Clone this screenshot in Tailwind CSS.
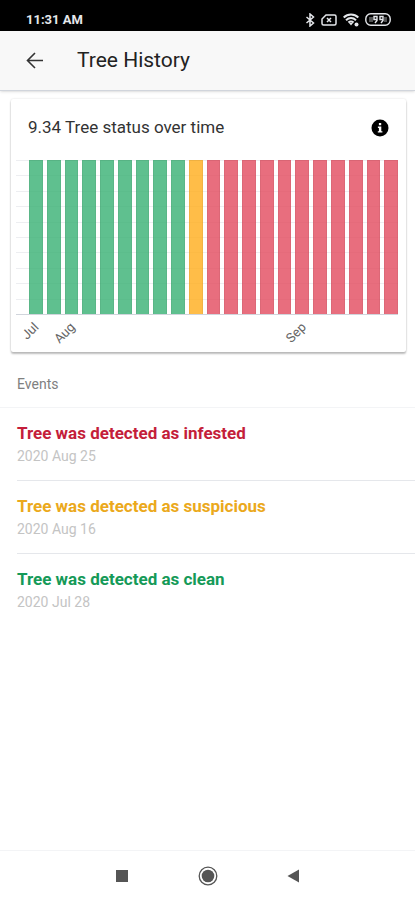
<!DOCTYPE html>
<html lang="en">
<head>
  <meta charset="UTF-8">
  <meta name="viewport" content="width=device-width, initial-scale=1.0">
  <title>Tree History</title>
  <script src="https://cdn.jsdelivr.net/npm/@tailwindcss/browser@4"></script>
</head>
<body class="bg-white font-[Roboto,sans-serif] text-[#333]">
  <div class="flex min-h-screen flex-col">

    <!-- Status bar -->
    <div class="flex h-[31px] items-center justify-between bg-black pl-[26px] pr-6 pt-2 text-gray-200">
      <span class="text-[13px] font-bold">11:31 AM</span>
      <div class="flex items-center gap-1.5">
        <svg class="h-3.5 w-2.5" viewBox="0 0 10 14" fill="none" stroke="currentColor" stroke-width="1.5"><path d="M1.500 4l7 6L5 13V1l3.500 3-7 6"/></svg>
        <svg class="h-3 w-4" viewBox="0 0 16 12" fill="none" stroke="currentColor" stroke-width="1.5"><path d="M5 1h8.500a1.500 1.500 0 0 1 1.500 1.500v7a1.500 1.500 0 0 1-1.500 1.500h-11A1.500 1.500 0 0 1 1 9.500V5z"/><path d="M6 4l4 4M10 4L6 8"/></svg>
        <svg class="h-3.5 w-4" viewBox="0 0 16 14" fill="none" stroke="currentColor" stroke-width="2"><path d="M.7 4.500c4.200-4 10.400-4 14.600 0M3 7.200c3-2.800 7-2.800 10 0M5.400 9.600c1.600-1.400 3.600-1.400 5.200 0"/><path d="M6 10h4l-2 2.600z" fill="currentColor" stroke="none"/><circle cx="13.500" cy="11.500" r="2" fill="currentColor" stroke="none"/></svg>
        <svg class="h-[13px] w-[26px]" viewBox="0 0 26 13" fill="none" stroke="currentColor" stroke-width="1.4"><rect x=".8" y=".8" width="24.400" height="11.400" rx="5"/><path d="M4 6.500h4M19 6.500h3" stroke-width="5" stroke-opacity=".35"/><path d="M9 3.500h3v3H9zM12 6v1.500L10 10M15 3.500h3v3h-3zM18 6v1.500L16 10"/></svg>
      </div>
    </div>

    <!-- App bar -->
    <header class="flex h-[60px] items-center border-b border-gray-300 bg-[#f8f8f8] pl-[26px] shadow-sm">
      <button type="button" aria-label="Back" class="mr-[34px]">
        <svg class="h-[17px] w-[17px]" viewBox="0 0 17 17" fill="none" stroke="currentColor" stroke-width="1.6"><path d="M17 8.500H1.500M9 1L1.500 8.500 9 16"/></svg>
      </button>
      <h1 class="text-[21px] text-[#222]">Tree History</h1>
    </header>

    <main class="flex-1">
      <!-- Chart card -->
      <section class="ml-[11px] mr-[9px] mt-2 rounded-xs bg-white pb-[37px] shadow-[0_2px_2px_rgba(0,0,0,0.25),0_0_2px_rgba(0,0,0,0.15)]">
        <div class="mb-[3px] flex h-[58px] items-center justify-between pl-[17px] pr-[17px]">
          <h2 class="text-[17px]">9.34 Tree status over time</h2>
          <button type="button" aria-label="Info">
            <svg class="h-[18px] w-[18px]" viewBox="0 0 18 18"><circle cx="9" cy="9" r="8.500" fill="#000"/><path d="M7.900 4h2.300v2.200H7.900zM6.900 7.500h3.400v4.700h1.100v1.400H6.800v-1.400h1.100V8.900h-1z" fill="#fff"/></svg>
          </button>
        </div>
        <div class="relative ml-[5px] mr-2">
          <div id="grid" class="absolute inset-0 flex flex-col border-b border-gray-300"></div>
          <div id="bars" class="relative ml-[13px] flex h-[155px] gap-1"></div>
        </div>
      </section>

      <!-- Events -->
      <section>
        <h3 class="flex h-14 items-center border-b border-gray-100 px-[17px] pt-2 text-sm text-[#808080]">Events</h3>
        <ul class="pl-[17px]">
          <li class="h-[73px] border-b border-gray-200 pt-[13px]">
            <p class="text-[17px] leading-6 font-bold text-[#c41e3a]">Tree was detected as infested</p>
            <p class="text-sm leading-[22px] text-[#c4c4c4]">2020 Aug 25</p>
          </li>
          <li class="h-[73px] border-b border-gray-200 pt-[13px]">
            <p class="text-[17px] leading-6 font-bold text-[#eba91c]">Tree was detected as suspicious</p>
            <p class="text-sm leading-[22px] text-[#c4c4c4]">2020 Aug 16</p>
          </li>
          <li class="h-[73px] pt-[13px]">
            <p class="text-[17px] leading-6 font-bold text-[#159a58]">Tree was detected as clean</p>
            <p class="text-sm leading-[22px] text-[#c4c4c4]">2020 Jul 28</p>
          </li>
        </ul>
      </section>
    </main>

    <!-- Navigation bar -->
    <nav class="flex h-[50px] items-center justify-center gap-[66px] border-t border-gray-100 text-[#555]">
      <button type="button" aria-label="Recent apps">
        <svg class="h-5 w-5" viewBox="0 0 20 20" fill="currentColor"><path d="M4 4h12v12H4z"/></svg>
      </button>
      <button type="button" aria-label="Home">
        <svg class="h-5 w-5" viewBox="0 0 20 20"><circle cx="10" cy="10" r="8.800" fill="none" stroke="currentColor" stroke-width="1.300"/><circle cx="10" cy="10" r="6.300" fill="currentColor"/></svg>
      </button>
      <button type="button" aria-label="Go back">
        <svg class="h-5 w-5" viewBox="0 0 20 20" fill="currentColor"><path d="M15 3.500v13L3.500 10z"/></svg>
      </button>
    </nav>
  </div>

  <script>
    const colors = {
      clean: "bg-[#37b073]/80",
      suspicious: "bg-[#ffad1a]/80",
      infested: "bg-[#e24a5e]/80"
    };
    const labels = { 0: "Jul", 2: "Aug", 15: "Sep" };

    const grid = document.getElementById("grid");
    for (let i = 0; i < 10; i++) {
      const line = document.createElement("div");
      line.className = "flex-1 border-t border-gray-200/70";
      grid.appendChild(line);
    }

    const bars = document.getElementById("bars");
    for (let i = 0; i < 21; i++) {
      const status = i < 9 ? "clean" : i === 9 ? "suspicious" : "infested";
      const bar = document.createElement("div");
      bar.className = "relative mb-px flex-1 border-x border-t border-black/5 " + colors[status];
      if (labels[i]) {
        bar.innerHTML = `<span class="absolute right-full top-full mt-1 origin-top-right -rotate-45 text-[13px] text-[#666]">${labels[i]}</span>`;
      }
      bars.appendChild(bar);
    }
  </script>
</body>
</html>
